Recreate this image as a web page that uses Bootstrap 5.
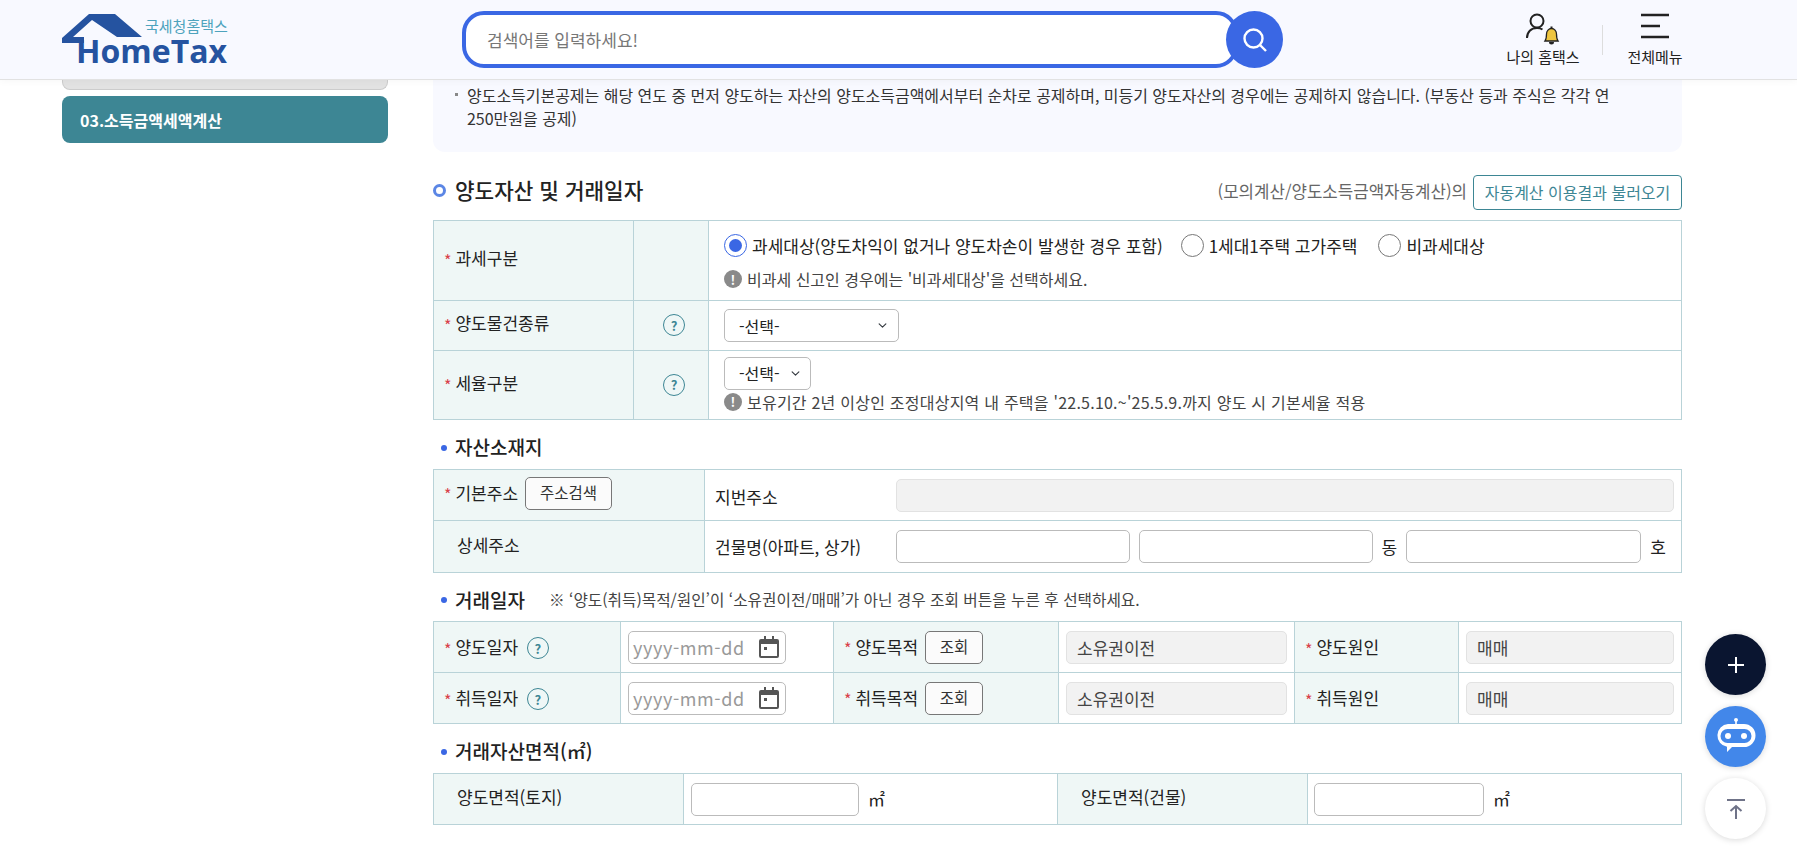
<!DOCTYPE html>
<html lang="ko"><head><meta charset="utf-8"><title>HomeTax</title>
<link href="https://cdn.jsdelivr.net/npm/bootstrap@5.3.0/dist/css/bootstrap.min.css" rel="stylesheet">
<style>
html,body{height:848px;overflow:hidden}
body{font-family:"Noto Sans CJK KR","Noto Sans",sans-serif;font-size:16px;color:#222;background:#fff}
.hdr{height:80px;background:#f8f9ff;border-bottom:1px solid #e2e2e2;padding:0 0 0 62px;box-shadow:0 1px 8px rgba(0,0,0,.04);position:relative;z-index:2}
.logo-box{width:172px;height:60px}
.search-wrap{margin-left:228px;width:821px}
.search-inp{width:776px;height:57px;border:4px solid #3a67e4;border-radius:22px;background:#fff;padding:0 21px;font-size:17px;color:#777}
.search-btn{width:57px;height:57px;margin-left:-12px;background:#3a67e4;border:0;padding:0;z-index:1}
.hdr-item{font-size:15px;color:#222;text-align:center;line-height:20px}
.mine{margin-left:205px;width:110px}
.mine span{margin-top:2px}
.vsep{width:1px;height:30px;background:#ddd;margin:0 17px 0 4px}
.allm{width:70px}
.wrap{padding-left:62px}
.side{width:326px;margin-right:45px}
.tab-grey{height:10px;background:#e2e2e2;border:1px solid #ccc;border-top:0;border-radius:0 0 8px 8px}
.tab-teal{height:47px;background:#3d8694;border-radius:8px;color:#fff;font-weight:700;font-size:16px;padding-left:18px;margin-top:6px}
.main-area{width:1249px}
.notice{background:#f8f9ff;border-radius:0 0 12px 12px;height:72px;padding:4px 60px 0 22px;line-height:23px;font-size:15.98px;color:#333}
.dotmk{width:3px;height:3px;background:#888;margin:9px 9px 0 0;flex:none}
.sec-h{height:68px;padding-top:12px}
.sec-l{padding-bottom:4px}
.ring{width:13px;height:13px;border:3px solid #5b86e5;border-radius:50%;margin:0 9px 0 0}
.sec-t{font-size:21.3px;font-weight:500;color:#222}
.sec-r{font-size:16.8px;color:#666}
.btn-auto{height:35px;width:209px;border:1px solid #3d8694;border-radius:4px;color:#3d8694;font-size:16px;padding:0;background:#fff;margin-left:6px}
.tb{table-layout:fixed;width:1249px;border-collapse:collapse;margin:0;--bs-table-bg:transparent}
.tb th,.tb td{border:1px solid #b9d3d8;padding:0 8px;vertical-align:middle;font-size:17px;font-weight:400;color:#222}
.tb th{background:#eff7f6;padding-bottom:4px}
.tb3 th{padding-bottom:0}
.tb .pad{padding-left:10px}
.tb .pad2{padding-left:23px}
.req{color:#d9404a;font-size:16px;margin-right:4px;vertical-align:-2px}
.qm{display:inline-flex;align-items:center;justify-content:center;width:22px;height:22px;border:1.5px solid #3d8694;border-radius:50%;color:#3d8694;font-size:13px;font-weight:700}
.qm-o{margin-left:6px}
.tb td.opt{padding-left:15px}
.rd-lbl{font-size:17px;color:#222;margin-right:18px}
.rd-2{margin-right:21px}
.rd-row{margin-bottom:9px;padding-top:3px}
.radio-x{width:23px;height:23px;border:1px solid #777;border-radius:50%;background:#fff;flex:none;margin-right:5px}
.radio-on{border-color:#3a67e4;display:flex;align-items:center;justify-content:center}
.radio-on i{display:block;width:13px;height:13px;background:#3a67e4;border-radius:50%}
.hint{font-size:16px;color:#444}
.hint-w{letter-spacing:.23px}
.ex{width:18px;height:18px;border-radius:50%;background:#8a8a8a;color:#fff;font-weight:700;font-size:13px;display:inline-flex;align-items:center;justify-content:center;margin-right:5px;flex:none}
.sel{height:33px;border:1px solid #bbb;border-radius:5px;font-size:16px;padding:0 14px;color:#222;background-size:11px 9px;background-position:right 10px center;box-shadow:none}
.sel-w{width:175px}.sel-s{width:87px;padding-right:22px;background-position:right 9px center}
.sub-h{font-size:19px;font-weight:500;color:#222;padding-top:6px}
.bul{width:6px;height:6px;background:#3a67e4;border-radius:50%;margin:0 8px 0 8px;flex:none}
.sh1{height:49px}.sh2{height:48px}.sh3{height:49px}
.note{font-size:15.7px;font-weight:400;color:#444;margin-left:24px}
.fld{height:33px;border:1px solid #bbb;border-radius:5px;padding:0 8px;font-size:17px;box-shadow:none}
.form-control.fld-dis:disabled{background:#f2f2f2;border-color:#e2e2e2;color:#444;padding-left:10px;opacity:1}
.btn-lk{height:33px;border:1px solid #777;border-radius:5px;background:#fbfbfb;color:#333;font-size:15.5px;padding:0;margin-left:7px}
.b1{width:87px}.b2{width:58px}
.date-w{width:158px;height:33px;margin-left:-1px;border:1px solid #bbb;border-radius:5px;padding:0 6px 0 4px;color:#999;font-size:18px;letter-spacing:.6px;background:#fff}
.f234{width:234px}.f205{width:235px}
.gap9{margin-left:9px}
.dong{margin:0 9px}.ho{margin-left:9px}
.tb .no-r{border-right:0}.tb .no-l{border-left:0}
.tb td.jb{padding-left:10px;padding-top:3px}
.tb td.jd{padding-left:10px}
.tb td.pr7{padding-right:7px}
.tb td.ds7{padding:0 7px}
.ml-1n{margin-left:-1px}.ml-2n{margin-left:-2px}
.unit{margin-left:9px}
.w168{width:168px}.w170{width:170px}
.fab-stack{position:fixed;left:1705px;top:634px;width:61px;gap:11px}
.fab{width:61px;height:61px;box-shadow:0 1px 6px rgba(0,0,0,.15);border:0;padding:0}
.fab-d{background:#0a1530}.fab-b{background:#4287ea}.fab-w{background:#fff}
</style></head><body>
<header class="hdr d-flex align-items-center">
 <div class="logo-box flex-none">
  <svg width="172" height="60" viewBox="0 -4 172 60"><path fill="#2553a0" d="M0 24 27 0h26l27 23H55L30 6 11 23h11v6H0z"/><text x="14" y="49" font-family="Open Sans" font-weight="700" font-size="32" fill="#2553a0">HomeTax</text><text x="83" y="18" font-family="Noto Sans CJK KR" font-size="15" fill="#4da3bd">국세청홈택스</text></svg>
 </div>
 <div class="search-wrap d-flex align-items-center">
  <div class="search-inp d-flex align-items-center">검색어를 입력하세요!</div>
  <button class="search-btn rounded-circle d-flex align-items-center justify-content-center" aria-label="검색"><svg width="28" height="28" viewBox="0 0 28 28" fill="none" stroke="#fff" stroke-width="2.4"><circle cx="12.5" cy="12.5" r="9"/><path d="M19 19l6 6"/></svg></button>
 </div>
 <div class="hdr-item mine d-flex flex-column align-items-center">
  <svg width="37" height="32" viewBox="0 0 37 32"><g fill="none" stroke="#222" stroke-width="2"><circle cx="12" cy="8" r="6.500"/><path d="M2 25c0-6 4-10 10-10 2 0 4 .5 5.500 1.500"/></g><path fill="#eec53f" stroke="#222" stroke-width="1.300" d="M20 28c1.500-2 1.500-3.500 1.500-7 0-3 2.200-5.500 5-5.500s5 2.500 5 5.500c0 3.500 0 5 1.500 7z"/><path fill="#222" d="M25.500 13.500h2v2h-2zM24 29h5a2.500 2.500 0 01-5 0z"/></svg>
  <span>나의 홈택스</span>
 </div>
 <div class="vsep"></div>
 <div class="hdr-item allm d-flex flex-column align-items-center">
  <svg width="30" height="26" viewBox="0 0 30 26"><path stroke="#222" stroke-width="2.500" d="M1 2h28M1 13h19M1 24h28"/></svg>
  <span class="mt-2">전체메뉴</span>
 </div>
</header>
<div class="wrap d-flex">
 <aside class="side">
  <div class="tab-grey"></div>
  <div class="tab-teal d-flex align-items-center">03.소득금액세액계산</div>
 </aside>
 <main class="main-area">
  <div class="notice d-flex"><span class="dotmk"></span><span>양도소득기본공제는 해당 연도 중 먼저 양도하는 자산의 양도소득금액에서부터 순차로 공제하며, 미등기 양도자산의 경우에는 공제하지 않습니다. (부동산 등과 주식은 각각 연 250만원을 공제)</span></div>
  <div class="sec-h d-flex align-items-center justify-content-between">
   <div class="sec-l d-flex align-items-center"><span class="ring"></span><span class="sec-t">양도자산 및 거래일자</span></div>
   <div class="d-flex align-items-center"><span class="sec-r">(모의계산/양도소득금액자동계산)의</span><button class="btn-auto">자동계산 이용결과 불러오기</button></div>
  </div>
  <table class="table tb">
   <colgroup><col style="width:200px"><col style="width:75px"><col></colgroup>
   <tr style="height:80px"><th class="pad"><span class="req">*</span>과세구분</th><th></th>
    <td class="opt"><div class="rd-row d-flex align-items-center">
      <span class="radio-x radio-on"><i></i></span><span class="rd-lbl">과세대상(양도차익이 없거나 양도차손이 발생한 경우 포함)</span>
      <span class="radio-x"></span><span class="rd-lbl rd-2">1세대1주택 고가주택</span>
      <span class="radio-x"></span><span class="rd-lbl">비과세대상</span></div>
     <div class="hint d-flex align-items-center"><span class="ex">!</span>비과세 신고인 경우에는 '비과세대상'을 선택하세요.</div></td></tr>
   <tr style="height:50px"><th class="pad"><span class="req">*</span>양도물건종류</th><th class="text-center"><span class="qm qm-o">?</span></th>
    <td class="opt"><select class="form-select sel sel-w"><option>-선택-</option></select></td></tr>
   <tr style="height:69px"><th class="pad"><span class="req">*</span>세율구분</th><th class="text-center"><span class="qm qm-o">?</span></th>
    <td class="opt"><select class="form-select sel sel-s"><option>-선택-</option></select>
     <div class="hint hint-w d-flex align-items-center"><span class="ex">!</span>보유기간 2년 이상인 조정대상지역 내 주택을 '22.5.10.~'25.5.9.까지 양도 시 기본세율 적용</div></td></tr>
  </table>
  <div class="sh1 sub-h d-flex align-items-center"><span class="bul"></span>자산소재지</div>
  <table class="table tb">
   <colgroup><col style="width:271px"><col style="width:191px"><col></colgroup>
   <tr style="height:51px"><th class="pad"><span class="req">*</span>기본주소<button class="btn-lk b1">주소검색</button></th><td class="jb no-r">지번주소</td><td class="pr7 ps-0 no-l"><input class="form-control fld fld-dis" disabled></td></tr>
   <tr style="height:52px"><th class="pad2">상세주소</th><td class="jd no-r">건물명(아파트, 상가)</td>
    <td class="px-0 no-l"><div class="d-flex align-items-center"><input class="form-control fld f234"><input class="form-control fld f234 gap9"><span class="dong">동</span><input class="form-control fld f205"><span class="ho">호</span></div></td></tr>
  </table>
  <div class="sh2 sub-h d-flex align-items-center"><span class="bul"></span>거래일자<span class="note">※ ‘양도(취득)목적/원인’이 ‘소유권이전/매매’가 아닌 경우 조회 버튼을 누른 후 선택하세요.</span></div>
  <table class="table tb tb3">
   <colgroup><col style="width:187px"><col style="width:213px"><col style="width:225px"><col style="width:236px"><col style="width:164px"><col></colgroup>
   <tr style="height:51px"><th class="pad"><span class="req">*</span>양도일자 <span class="qm ms-1">?</span></th>
    <td><div class="date-w d-flex align-items-center justify-content-between">yyyy-mm-dd<svg width="20" height="22" viewBox="0 0 20 22" fill="#555"><path d="M5 0h2v3h6V0h2v3h3a2 2 0 012 2v15a2 2 0 01-2 2H2a2 2 0 01-2-2V5a2 2 0 012-2h3zM2 8v12h16V8zm3 3h3v3H5z"/></svg></div></td>
    <th class="pad"><span class="req">*</span>양도목적<button class="btn-lk b2">조회</button></th>
    <td class="ds7"><input class="form-control fld fld-dis" value="소유권이전" disabled></td>
    <th class="pad"><span class="req">*</span>양도원인</th>
    <td class="ds7"><input class="form-control fld fld-dis" value="매매" disabled></td></tr>
   <tr style="height:51px"><th class="pad"><span class="req">*</span>취득일자 <span class="qm ms-1">?</span></th>
    <td><div class="date-w d-flex align-items-center justify-content-between">yyyy-mm-dd<svg width="20" height="22" viewBox="0 0 20 22" fill="#555"><path d="M5 0h2v3h6V0h2v3h3a2 2 0 012 2v15a2 2 0 01-2 2H2a2 2 0 01-2-2V5a2 2 0 012-2h3zM2 8v12h16V8zm3 3h3v3H5z"/></svg></div></td>
    <th class="pad"><span class="req">*</span>취득목적<button class="btn-lk b2">조회</button></th>
    <td class="ds7"><input class="form-control fld fld-dis" value="소유권이전" disabled></td>
    <th class="pad"><span class="req">*</span>취득원인</th>
    <td class="ds7"><input class="form-control fld fld-dis" value="매매" disabled></td></tr>
  </table>
  <div class="sh3 sub-h d-flex align-items-center"><span class="bul"></span>거래자산면적(㎡)</div>
  <table class="table tb">
   <colgroup><col style="width:250px"><col style="width:374px"><col style="width:250px"><col></colgroup>
   <tr style="height:51px"><th class="pad2">양도면적(토지)</th><td><div class="d-flex align-items-center ml-1n"><input class="form-control fld w168"><span class="unit">㎡</span></div></td>
    <th class="pad2">양도면적(건물)</th><td><div class="d-flex align-items-center ml-2n"><input class="form-control fld w170"><span class="unit">㎡</span></div></td></tr>
  </table>
 </main>
</div>
<div class="fab-stack d-flex flex-column">
 <button class="fab fab-d rounded-circle d-flex align-items-center justify-content-center" aria-label="더보기"><svg width="18" height="18" viewBox="0 0 18 18"><path stroke="#fff" stroke-width="2" d="M9 1v16M1 9h16"/></svg></button>
 <button class="fab fab-b rounded-circle d-flex align-items-center justify-content-center" aria-label="챗봇"><svg width="42" height="38" viewBox="0 0 42 38"><path fill="#fff" d="M19 2a2 2 0 114 0 2 2 0 01-1.200 1.800V6h-1.600V3.800A2 2 0 0119 2zM13 6h16a11.500 11.500 0 010 23H17l-5 5v-5.200A11.500 11.500 0 0113 6z"/><rect x="5.500" y="11" width="31" height="14" rx="7" fill="#4287ea"/><circle cx="13" cy="18" r="3" fill="#fff"/><circle cx="29" cy="18" r="3" fill="#fff"/></svg></button>
 <button class="fab fab-w rounded-circle d-flex align-items-center justify-content-center" aria-label="맨 위로"><svg width="20" height="22" viewBox="0 0 20 22" fill="none" stroke="#6f7388" stroke-width="2"><path d="M1 2h18M10 21V8M4.500 13 10 8l5.500 5"/></svg></button>
</div>
<script src="https://cdn.jsdelivr.net/npm/bootstrap@5.3.0/dist/js/bootstrap.bundle.min.js"></script>
</body></html>
